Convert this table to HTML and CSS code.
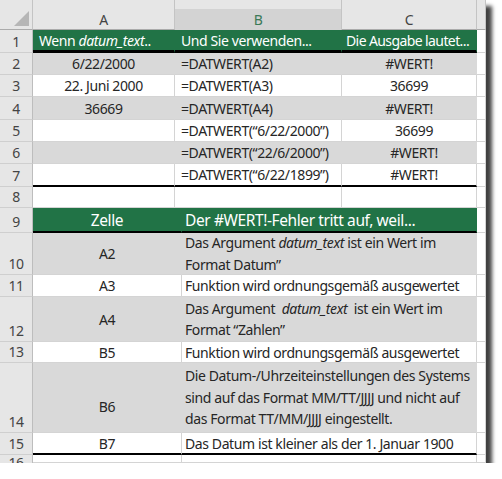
FILE: index.html
```html
<!DOCTYPE html>
<html lang="de">
<head>
    <meta charset="UTF-8">
    <title>DATWERT #WERT!</title>
    <link rel="stylesheet" href="styles.css">
</head>
<body>
    <div class="sheet">
        <!-- Spaltenkoepfe -->
        <div class="row top colhead">
            <div class="corner"><span class="tri"></span></div>
            <div class="letter">A</div>
            <div class="letter sel">B</div>
            <div class="letter">C</div>
            <div class="letter"></div>
        </div>

        <!-- Obere Tabelle -->
        <div class="row top h1">
            <div class="num">1</div>
            <div class="cell head l thick3"><span>Wenn <i>datum_text</i>..</span></div>
            <div class="cell head l thick3"><span>Und Sie verwenden...</span></div>
            <div class="cell head l tight thick3"><span>Die Ausgabe lautet...</span></div>
            <div class="cell"></div>
        </div>
        <div class="row top r22 gray">
            <div class="num">2</div>
            <div class="cell c"><span>6/22/2000</span></div>
            <div class="cell l"><span>=DATWERT(A2)</span></div>
            <div class="cell c"><span>#WERT!</span></div>
            <div class="cell"></div>
        </div>
        <div class="row top r22">
            <div class="num">3</div>
            <div class="cell c"><span>22. Juni 2000</span></div>
            <div class="cell l"><span>=DATWERT(A3)</span></div>
            <div class="cell c"><span>36699</span></div>
            <div class="cell"></div>
        </div>
        <div class="row top r23 gray">
            <div class="num">4</div>
            <div class="cell c"><span>36669</span></div>
            <div class="cell l"><span>=DATWERT(A4)</span></div>
            <div class="cell c"><span>#WERT!</span></div>
            <div class="cell"></div>
        </div>
        <div class="row top r22">
            <div class="num">5</div>
            <div class="cell c"></div>
            <div class="cell l"><span>=DATWERT(“6/22/2000”)</span></div>
            <div class="cell c sh"><span>36699</span></div>
            <div class="cell"></div>
        </div>
        <div class="row top r22 gray">
            <div class="num">6</div>
            <div class="cell c"></div>
            <div class="cell l"><span>=DATWERT(“22/6/2000”)</span></div>
            <div class="cell c sh"><span>#WERT!</span></div>
            <div class="cell"></div>
        </div>
        <div class="row top r23">
            <div class="num">7</div>
            <div class="cell c thick2"></div>
            <div class="cell l thick2"><span>=DATWERT(“6/22/1899”)</span></div>
            <div class="cell c sh thick2"><span>#WERT!</span></div>
            <div class="cell"></div>
        </div>
        <div class="row top r21">
            <div class="num">8</div>
            <div class="cell"></div>
            <div class="cell"></div>
            <div class="cell"></div>
            <div class="cell"></div>
        </div>

        <!-- Untere Tabelle -->
        <div class="row bottom h9">
            <div class="num">9</div>
            <div class="cell head big c thick2"><span>Zelle</span></div>
            <div class="cell head big l2 thick2"><span>Der #WERT!-Fehler tritt auf, weil...</span></div>
            <div class="cell"></div>
        </div>
        <div class="row bottom r42 gray">
            <div class="num">10</div>
            <div class="cell c"><span>A2</span></div>
            <div class="cell l2 text"><p>Das Argument <i>datum_text</i> ist ein Wert im<br>Format Datum”</p></div>
            <div class="cell"></div>
        </div>
        <div class="row bottom r22">
            <div class="num">11</div>
            <div class="cell c"><span>A3</span></div>
            <div class="cell l2"><span>Funktion wird ordnungsgemäß ausgewertet</span></div>
            <div class="cell"></div>
        </div>
        <div class="row bottom r45 gray">
            <div class="num">12</div>
            <div class="cell c"><span>A4</span></div>
            <div class="cell l2 text"><p>Das Argument &nbsp;<i>datum_text</i>&nbsp; ist ein Wert im<br>Format “Zahlen”</p></div>
            <div class="cell"></div>
        </div>
        <div class="row bottom r21">
            <div class="num">13</div>
            <div class="cell c"><span>B5</span></div>
            <div class="cell l2"><span>Funktion wird ordnungsgemäß ausgewertet</span></div>
            <div class="cell"></div>
        </div>
        <div class="row bottom r70 gray">
            <div class="num">14</div>
            <div class="cell c low"><span>B6</span></div>
            <div class="cell l2 text"><p>Die Datum-/Uhrzeiteinstellungen des Systems<br>sind auf das Format MM/TT/JJJJ und nicht auf<br>das Format TT/MM/JJJJ eingestellt.</p></div>
            <div class="cell"></div>
        </div>
        <div class="row bottom r22">
            <div class="num">15</div>
            <div class="cell c thick2"><span>B7</span></div>
            <div class="cell l2 thick2"><span>Das Datum ist kleiner als der 1. Januar 1900</span></div>
            <div class="cell"></div>
        </div>
        <div class="row bottom r8">
            <div class="num cut">16</div>
            <div class="cell"></div>
            <div class="cell"></div>
            <div class="cell"></div>
        </div>
    </div>
</body>
</html>
```

FILE: styles.css
```css
body {
    margin: 0;
    background: #ffffff;
    font-family: "Noto Sans", "Open Sans", sans-serif;
    font-size: 14px;
    letter-spacing: -0.4px;
    color: #262626;
}

p {
    margin: 0;
}

.sheet {
    width: 486px;
    height: 463px;
    overflow: hidden;
    background: #ffffff;
    box-shadow: 6px 6px 4px rgba(0, 0, 0, 0.75);
}

.row {
    display: grid;
}

.row.top {
    grid-template-columns: 33px 142px 167px 135px 9px;
}

.row.bottom {
    grid-template-columns: 33px 149px 295px 9px;
}

/* Spaltenkoepfe */
.colhead {
    height: 30px;
}

.corner {
    position: relative;
    background: #e6e6e6;
    border-right: 1px solid #c4c4c4;
    border-bottom: 1px solid #ababab;
}

.tri {
    position: absolute;
    right: 3px;
    bottom: 3px;
    width: 0;
    height: 0;
    border-left: 15px solid transparent;
    border-bottom: 15px solid #b6b6b6;
}

.letter {
    display: flex;
    align-items: center;
    justify-content: center;
    padding-top: 9px;
    background: #e6e6e6;
    border-right: 1px solid #c4c4c4;
    border-bottom: 1px solid #ababab;
    color: #444444;
}

.letter.sel {
    background: #d3d3d3;
    box-shadow: inset 0 9px 0 #e6e6e6;
    color: #3b7a57;
    border-bottom: none;
}

/* Zeilennummern */
.num {
    display: flex;
    align-items: flex-end;
    justify-content: center;
    background: #e6e6e6;
    border-right: 1px solid #bdbdbd;
    border-bottom: 1px solid #cfcfcf;
    color: #444444;
    line-height: 21px;
    overflow: hidden;
}

.num.cut {
    align-items: flex-start;
    line-height: 8px;
    padding-top: 4px;
    border-bottom: none;
}

/* Zellen */
.cell {
    display: flex;
    align-items: center;
    border-right: 1px solid #d4d4d4;
    border-bottom: 1px solid #d4d4d4;
    white-space: nowrap;
    overflow: hidden;
}

.cell.c {
    justify-content: center;
}

.cell.l {
    padding-left: 6px;
}

.cell.l.tight {
    padding-left: 4px;
    letter-spacing: -0.6px;
}

.cell.l2 {
    padding-left: 3px;
}

.cell.sh {
    padding-left: 10px;
}

.cell.text {
    line-height: 21.5px;
}

.cell.low {
    padding-top: 18px;
}

.gray .cell {
    background: #d9d9d9;
    border-right-color: #d9d9d9;
    border-bottom-color: #d4d4d4;
}

.gray .cell:last-child {
    background: #ffffff;
    border-right-color: #d4d4d4;
}

.cell.head {
    background: #217346;
    border-right-color: #217346;
    color: #ffffff;
}

.cell.big {
    font-size: 15.5px;
}

.cell.thick3 {
    border-bottom: 3px solid #000000;
}

.cell.thick2 {
    border-bottom: 2px solid #000000;
}

/* Zeilenhoehen */
.h1 { height: 23px; }
.r8 { height: 8px; }
.r21 { height: 21px; }
.r22 { height: 22px; }
.r23 { height: 23px; }
.h9 { height: 25px; }
.r42 { height: 42px; }
.r45 { height: 45px; }
.r70 { height: 70px; }
```
